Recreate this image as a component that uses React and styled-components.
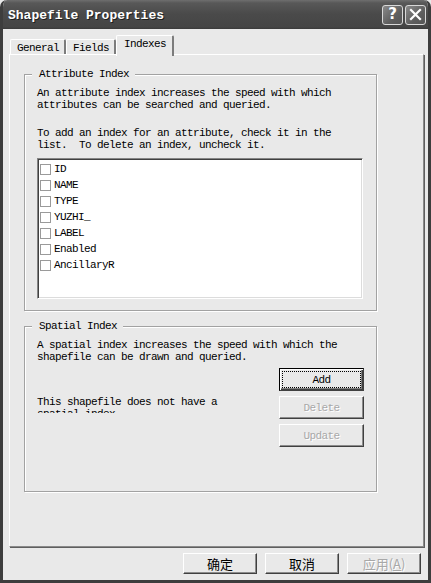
import React from "react";
import styled, { createGlobalStyle } from "styled-components";

const GlobalStyle = createGlobalStyle`
  html, body {
    margin: 0;
    padding: 0;
    background: #e9e9e9;
  }
  * { box-sizing: border-box; }
`;

const mono = `"Liberation Mono", "DejaVu Sans Mono", monospace`;
const cjk = `"Noto Sans CJK SC", "DejaVu Sans", sans-serif`;

const Window = styled.div`
  width: 431px;
  height: 583px;
  display: flex;
  flex-direction: column;
  background: #e9e9e9;
  border: 3px solid #3d3d3d;
  border-top: none;
  border-radius: 7px 7px 0 0;
  overflow: hidden;
  font-family: ${mono};
  font-size: 11px;
  letter-spacing: -0.6px;
  line-height: 12px;
  color: #000;
`;

const TitleBar = styled.div`
  height: 29px;
  margin: 0 -3px;
  display: flex;
  align-items: center;
  padding: 0 5px 0 8px;
  background: linear-gradient(#6e6e6e 0px, #585858 3px, #4a4a4a 14px, #454545 27px, #3a3a3a 29px);
  border-radius: 7px 7px 0 0;
`;

const Title = styled.div`
  flex: 1;
  color: #fff;
  font-family: ${mono};
  font-weight: bold;
  font-size: 13px;
  letter-spacing: 0;
  text-shadow: 1px 1px 0 #1e1e1e;
  padding-top: 2px;
`;

const CaptionButton = styled.div`
  width: 21px;
  height: 20px;
  margin-left: 2px;
  border: 1px solid #d8d8d8;
  border-radius: 3px;
  background: linear-gradient(135deg, #8a8a8a, #5e5e5e 60%, #555);
  display: flex;
  align-items: center;
  justify-content: center;
  color: #fff;
  font-family: "DejaVu Sans", sans-serif;
  font-weight: bold;
  font-size: 15px;
  letter-spacing: 0;
  line-height: 1;
`;

const Body = styled.div`
  flex: 1;
  display: flex;
  flex-direction: column;
  padding: 6px 4px 6px 6px;
`;

const TabRow = styled.div`
  height: 19px;
  display: flex;
  align-items: flex-end;
  padding-left: 1px;
`;

const Tab = styled.div`
  position: relative;
  z-index: ${(p) => (p.$active ? 1 : 0)};
  height: ${(p) => (p.$active ? "21px" : "15px")};
  margin-bottom: ${(p) => (p.$active ? "-2px" : "0")};
  padding: ${(p) => (p.$active ? "2px 6px 0 7px" : "2px 5px 0 6px")};
  background: #e9e9e9;
  border-top: 1px solid #fff;
  border-left: 1px solid #fff;
  border-right: 2px solid #7c7c7c;
  border-radius: 2px 2px 0 0;
  white-space: nowrap;
`;

const Panel = styled.div`
  height: 493px;
  border: 1px solid #fff;
  border-right-color: #8a8a8a;
  border-bottom-color: #8a8a8a;
  box-shadow: 1px 1px 0 #5f5f5f;
  padding: 19px 14px;
  display: flex;
  flex-direction: column;
  gap: 15px;
`;

const Group = styled.div`
  position: relative;
  width: 353px;
  height: ${(p) => p.$h}px;
  border: 1px solid #a2a2a2;
  box-shadow: inset 1px 1px 0 #fff, 1px 1px 0 #fff;
  padding: 12px 12px 0 12px;
`;

const Legend = styled.span`
  position: absolute;
  top: -7px;
  left: 7px;
  padding: 0 6px 0 7px;
  background: #e9e9e9;
`;

const Para = styled.p`
  margin: ${(p) => p.$before || 0}px 0 ${(p) => p.$after || 0}px;
  white-space: pre;
`;

const ListBox = styled.div`
  width: 326px;
  height: 141px;
  background: #fff;
  border-top: 1px solid #858585;
  border-left: 1px solid #858585;
  border-right: 1px solid #fff;
  border-bottom: 1px solid #fff;
  box-shadow: inset 1px 1px 0 #404040, inset -1px -1px 0 #dcdcdc;
  padding: 2px 2px 0 2px;
`;

const Item = styled.div`
  height: 16px;
  display: flex;
  align-items: center;
  gap: 3px;
`;

const Check = styled.span`
  width: 11px;
  height: 11px;
  border: 1px solid #9a9a9a;
  background: #fff;
  flex: none;
`;

const SpatialRow = styled.div`
  display: flex;
  justify-content: space-between;
  margin-top: 5px;
`;

const Note = styled.div`
  width: 200px;
  height: 17px;
  margin-top: 28px;
  overflow: hidden;
`;

const ButtonColumn = styled.div`
  display: flex;
  flex-direction: column;
  gap: 5px;
`;

const Button = styled.div`
  width: ${(p) => p.$w || 85}px;
  height: ${(p) => p.$h || 23}px;
  display: flex;
  align-items: center;
  justify-content: center;
  background: #e9e9e9;
  border: 1px solid ${(p) => (p.$default ? "#000" : "#fff")};
  border-right-color: #404040;
  border-bottom-color: #404040;
  box-shadow: ${(p) =>
    p.$default
      ? "inset 1px 1px 0 #fff, inset -1px -1px 0 #404040, inset -2px -2px 0 #808080"
      : "inset -1px -1px 0 #8c8c8c"};
  outline: ${(p) => (p.$default ? "1px dotted #000" : "none")};
  outline-offset: -4px;
  color: ${(p) => (p.$disabled ? "#a8a8a8" : "#000")};
  text-shadow: ${(p) => (p.$disabled ? "1px 1px 0 #fff" : "none")};
  font-family: ${(p) => (p.$cjk ? cjk : mono)};
  font-size: ${(p) => (p.$cjk ? "13px" : "11px")};
  letter-spacing: ${(p) => (p.$cjk ? "0" : "-0.6px")};
  white-space: nowrap;
`;

const Footer = styled.div`
  display: flex;
  justify-content: flex-end;
  gap: 8px;
  margin-top: 6px;
  padding-right: 3px;
`;

const fields = ["ID", "NAME", "TYPE", "YUZHI_", "LABEL", "Enabled", "AncillaryR"];

function CloseGlyph() {
  return (
    <svg width="13" height="13" viewBox="0 0 13 13">
      <path d="M2 2 L11 11 M11 2 L2 11" stroke="#fff" strokeWidth="2.2" strokeLinecap="square" />
    </svg>
  );
}

export default function App() {
  return (
    <>
      <GlobalStyle />
      <Window>
        <TitleBar>
          <Title>Shapefile Properties</Title>
          <CaptionButton>?</CaptionButton>
          <CaptionButton>
            <CloseGlyph />
          </CaptionButton>
        </TitleBar>
        <Body>
          <TabRow>
            <Tab>General</Tab>
            <Tab>Fields</Tab>
            <Tab $active>Indexes</Tab>
          </TabRow>
          <Panel>
            <Group $h={237}>
              <Legend>Attribute Index</Legend>
              <Para>{"An attribute index increases the speed with which\nattributes can be searched and queried."}</Para>
              <Para $before={16} $after={7}>
                {"To add an index for an attribute, check it in the\nlist.  To delete an index, uncheck it."}
              </Para>
              <ListBox>
                {fields.map((f) => (
                  <Item key={f}>
                    <Check />
                    <span>{f}</span>
                  </Item>
                ))}
              </ListBox>
            </Group>
            <Group $h={166}>
              <Legend>Spatial Index</Legend>
              <Para>{"A spatial index increases the speed with which the\nshapefile can be drawn and queried."}</Para>
              <SpatialRow>
                <Note>This shapefile does not have a spatial index</Note>
                <ButtonColumn>
                  <Button $default>Add</Button>
                  <Button $disabled>Delete</Button>
                  <Button $disabled>Update</Button>
                </ButtonColumn>
              </SpatialRow>
            </Group>
          </Panel>
          <Footer>
            <Button $w={74} $h={21} $cjk>确定</Button>
            <Button $w={74} $h={21} $cjk>取消</Button>
            <Button $w={74} $h={21} $cjk $disabled>
              应用(<u>A</u>)
            </Button>
          </Footer>
        </Body>
      </Window>
    </>
  );
}
